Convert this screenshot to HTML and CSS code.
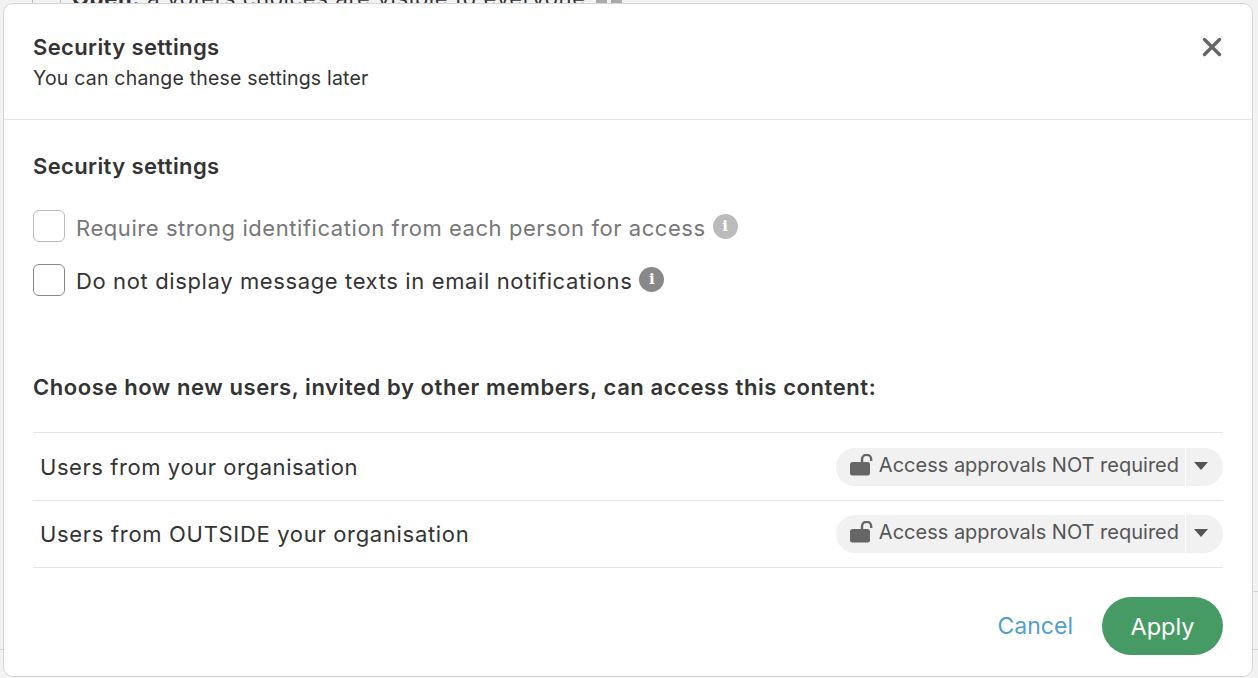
FILE: index.html
```html
<!DOCTYPE html>
<html lang="en">
<head>
<meta charset="utf-8">
<title>Security settings</title>
<link rel="stylesheet" href="styles.css">
</head>
<body>
<div class="backdrop">
  <span class="edge edge-a"></span><span class="edge edge-b"></span>
  <span class="line line-l"></span><span class="line line-r1"></span><span class="line line-r2"></span>
  <div class="behind"><span class="behind-text"><b>Open:</b> a voters choices are visible to everyone</span><span class="behind-icon"></span><span class="behind-icon"></span></div>
</div>
<main class="dialog">
  <header class="head">
    <div>
      <h1 class="title">Security settings</h1>
      <p class="sub">You can change these settings later</p>
    </div>
    <svg class="close" width="20" height="20" viewBox="0 0 20 20"><path d="M2.5 2.5l15 15M17.5 2.5l-15 15" stroke="#666" stroke-width="3.4" stroke-linecap="round" fill="none"/></svg>
  </header>
  <section class="body">
    <h2 class="title">Security settings</h2>
    <div class="checks">
      <label class="check disabled"><span class="box"></span><span class="check-text">Require strong identification from each person for access</span><span class="info">i</span></label>
      <label class="check enabled"><span class="box"></span><span class="check-text">Do not display message texts in email notifications</span><span class="info">i</span></label>
    </div>
    <h3 class="choose">Choose how new users, invited by other members, can access this content:</h3>
    <div class="rows">
      <div class="row row-first"><span>Users from your organisation</span>
        <div class="pill"><span class="pill-main"><svg class="lock" width="26" height="24" viewBox="0 0 26 24"><rect x="0" y="8" width="20" height="13.5" rx="2.5" fill="#666"/><path d="M12 9V5.4a4.6 4.6 0 0 1 9.2 0V7" stroke="#666" stroke-width="2.4" fill="none"/></svg>Access approvals NOT required</span><span class="pill-arrow"></span></div>
      </div>
      <div class="row row-second"><span>Users from OUTSIDE your organisation</span>
        <div class="pill"><span class="pill-main"><svg class="lock" width="26" height="24" viewBox="0 0 26 24"><rect x="0" y="8" width="20" height="13.5" rx="2.5" fill="#666"/><path d="M12 9V5.4a4.6 4.6 0 0 1 9.2 0V7" stroke="#666" stroke-width="2.4" fill="none"/></svg>Access approvals NOT required</span><span class="pill-arrow"></span></div>
      </div>
    </div>
    <footer class="foot"><a class="cancel">Cancel</a><button class="apply">Apply</button></footer>
  </section>
</main>
</body>
</html>
```
FILE: styles.css
```css
* { box-sizing: border-box; }
html, body { margin: 0; height: 100%; overflow: hidden; }
body { background: #f2f2f2; font-family: "Inter", "Liberation Sans", sans-serif; color: #333; position: relative; }
.backdrop { position: absolute; inset: 0; overflow: hidden; }
.edge { position: absolute; top: 0; width: 1px; height: 4px; background: #bbb; }
.edge-a { left: 32px; }
.edge-b { left: 60px; }
.line { position: absolute; height: 1px; background: #d4d4d4; }
.line-l { left: 0; top: 649px; width: 4px; }
.line-r1 { right: 0; top: 591px; width: 6px; }
.line-r2 { right: 0; top: 649px; width: 6px; }
.behind { position: absolute; top: -15px; left: 72px; display: flex; gap: 4px; font-size: 22px; letter-spacing: .67px; color: #333; white-space: nowrap; }
.behind-text { margin-right: 6px; }
.behind-icon { width: 11px; height: 20px; background: #aaa; }
.dialog { position: absolute; left: 3px; top: 3px; width: 1250px; height: 674px; background: #fff; border: 1px solid #d6d6d6; border-radius: 10px; overflow: hidden; }
.head { height: 116px; border-bottom: 1px solid #e5e5e5; padding: 29px 30px 0 29px; display: flex; justify-content: space-between; }
.title { margin: 0; font-size: 22px; line-height: 28px; font-weight: 600; letter-spacing: .38px; color: #333; }
.sub { margin: 4px 0 0; font-size: 19.5px; line-height: 26px; letter-spacing: .2px; color: #333; }
.close { margin: 4px 0 0; }
.body { padding: 32px 29px 0; }
.checks { margin-top: 30px; display: flex; flex-direction: column; gap: 22px; }
.check { display: flex; align-items: center; gap: 11px; font-size: 22px; line-height: 32px; height: 32px; letter-spacing: .56px; }
.check-text { padding-top: 3px; }
.box { width: 32px; height: 32px; border: 1px solid #888; border-radius: 6px; background: #fff; }
.disabled { color: #777; }
.disabled .box { border-color: #bbb; }
.enabled { letter-spacing: .62px; }
.enabled .check-text { padding-top: 1px; }
.info { width: 25px; height: 25px; margin: 0 0 0 -4px; border-radius: 50%; background: #888; color: #fff; font-size: 15px; font-weight: 800; line-height: 25px; letter-spacing: 0; text-align: center; font-family: "DejaVu Serif", serif; }
.enabled .info { margin-top: -2px; }
.disabled .info { background: #bbb; }
.choose { margin: 76px 0 0; font-size: 22px; line-height: 30px; font-weight: 600; letter-spacing: .58px; color: #333; }
.rows { margin-top: 30px; border-top: 1px solid #e5e5e5; }
.row { border-bottom: 1px solid #e5e5e5; display: flex; align-items: center; justify-content: space-between; padding-left: 7px; font-size: 22px; letter-spacing: .57px; }
.row-first { height: 68px; }
.row-second { height: 67px; letter-spacing: .68px; }
.pill { display: flex; height: 38px; background: #f1f1f1; border-radius: 19px; font-size: 20px; letter-spacing: 0; color: #555; }
.pill-main { display: flex; align-items: center; gap: 3px; padding: 0 6px 4px 14px; border-right: 1px solid #fff; }
.lock { margin-top: 2px; }
.pill-arrow { width: 37px; position: relative; }
.pill-arrow::after { content: ""; position: absolute; left: 8px; top: 14px; border: 7px solid transparent; border-top: 8px solid #555; border-bottom: 0; }
.foot { display: flex; justify-content: flex-end; align-items: center; gap: 29px; margin-top: 29px; }
.cancel { font-size: 23px; color: #4f9fd1; }
.apply { width: 121px; height: 58px; border: 0; border-radius: 29px; background: #469b64; color: #fff; font: inherit; font-size: 23.5px; }
```
